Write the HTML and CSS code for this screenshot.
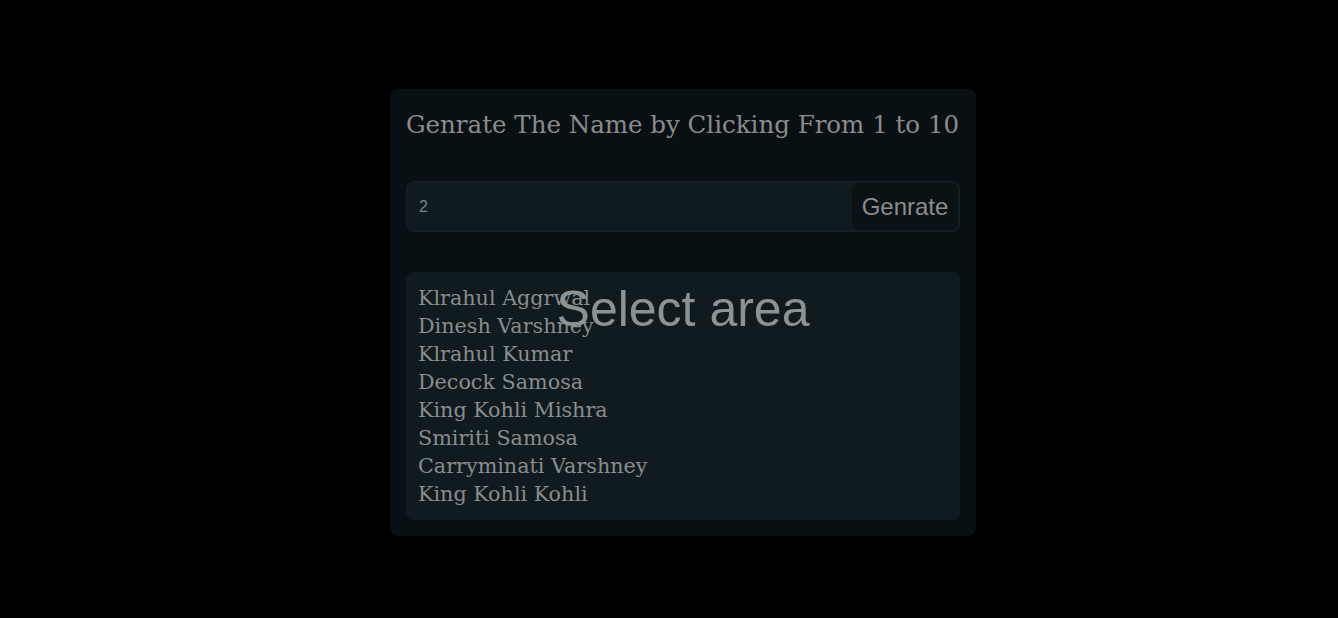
FILE: index.html
```html
<!DOCTYPE html>
<html>
<head>
<meta charset="utf-8">
<link rel="stylesheet" href="styles.css">
</head>
<body>
<div class="card">
  <h1 class="title">Genrate The Name by Clicking From 1 to 10</h1>
  <div class="form">
    <input class="num" type="text" value="2">
    <button class="btn">Genrate</button>
  </div>
  <div class="list">
    <div class="name">Klrahul Aggrwal</div>
    <div class="name">Dinesh Varshney</div>
    <div class="name">Klrahul Kumar</div>
    <div class="name">Decock Samosa</div>
    <div class="name">King Kohli Mishra</div>
    <div class="name">Smiriti Samosa</div>
    <div class="name">Carryminati Varshney</div>
    <div class="name">King Kohli Kohli</div>
  </div>
  <div class="overlay">Select area</div>
</div>
</body>
</html>
```
FILE: styles.css
```css
html, body {
  margin: 0;
  padding: 0;
  background: #000;
  height: 100%;
}
body {
  display: flex;
  justify-content: center;
  align-items: flex-start;
  padding-left: 28px;
  box-sizing: border-box;
}
.card {
  position: relative;
  margin-top: 89px;
  width: 586px;
  box-sizing: border-box;
  padding: 16px;
  background: #091013;
  border-radius: 8px;
  font-family: "DejaVu Serif", serif;
  color: #8a8d8c;
}
.title {
  margin: 0 0 36px 0;
  font-weight: normal;
  font-size: 24.5px;
  line-height: 40px;
  white-space: nowrap;
  color: #8a8c8b;
}
.form {
  display: flex;
  height: 51px;
  background: #0f1b1f;
  border: 1px solid #14232a;
  border-radius: 8px;
  box-sizing: border-box;
  align-items: center;
  padding: 1px 1px 1px 0;
}
.num {
  flex: 1;
  height: 100%;
  background: transparent;
  border: none;
  outline: none;
  padding: 0 12px;
  font-family: "Liberation Sans", Arial, sans-serif;
  font-size: 16px;
  color: #7e8584;
}
.btn {
  height: 47px;
  width: 106px;
  background: #0a1215;
  border: none;
  border-radius: 8px;
  font-family: "Liberation Sans", Arial, sans-serif;
  font-size: 24px;
  color: #8a8d8c;
  padding: 0;
}
.list {
  margin-top: 40px;
  background: #0f1b1f;
  border-radius: 8px;
  padding: 12px;
}
.name {
  font-size: 20.7px;
  line-height: 28px;
}
.overlay {
  position: absolute;
  left: 0;
  right: 0;
  top: 191px;
  text-align: center;
  font-family: "Liberation Sans", Arial, sans-serif;
  font-size: 50px;
  color: #8d9292;
  pointer-events: none;
}
```
